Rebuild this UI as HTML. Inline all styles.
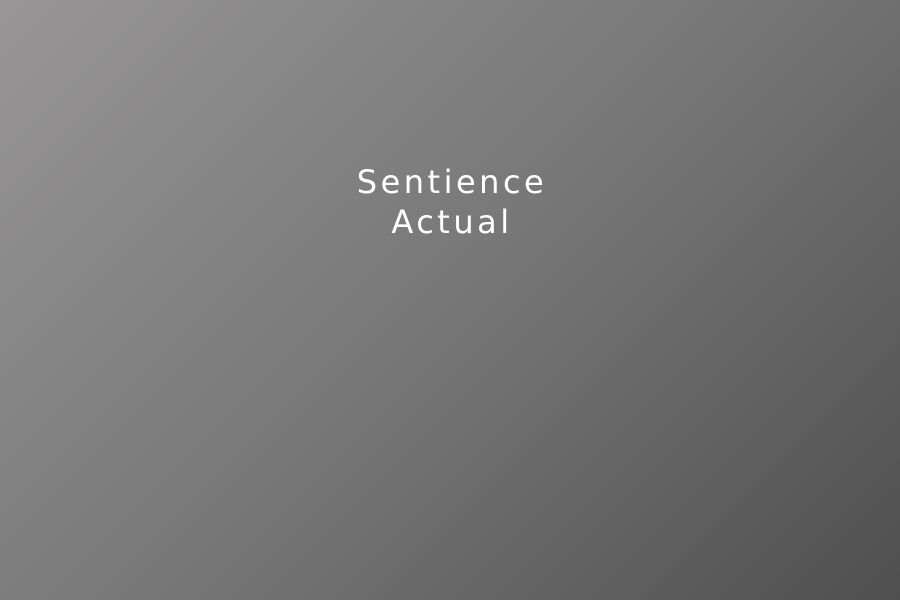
<!DOCTYPE html>
<html><head><style>
html,body{margin:0;padding:0;width:900px;height:600px;overflow:hidden}
body{background:linear-gradient(135deg,#989697 0%,#777 50%,#4f4f4f 100%);}
.t{position:absolute;left:2px;width:900px;top:162px;text-align:center;color:#fff;font-family:"DejaVu Sans","Liberation Sans",sans-serif;font-size:32px;line-height:40px;letter-spacing:3.5px}
</style></head><body>
<div class="t">Sentience<br>Actual</div>
</body></html>
